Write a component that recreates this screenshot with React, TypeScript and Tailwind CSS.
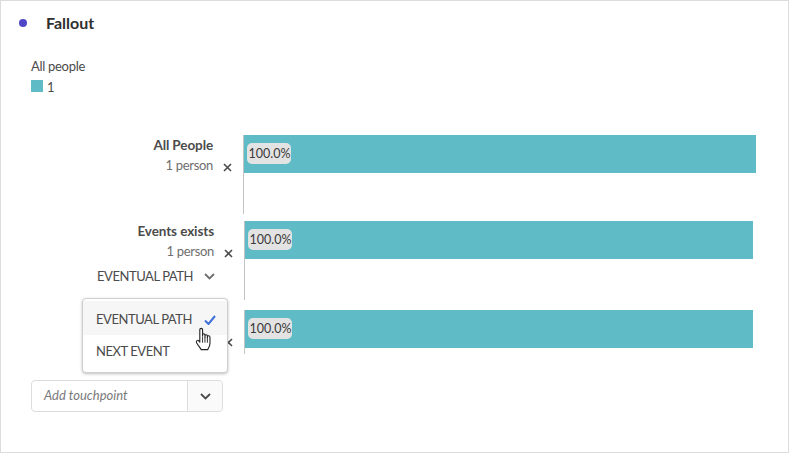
import { ReactNode } from "react";

const font = "font-['Lato','Noto_Sans',sans-serif]";

const CloseX = () => (
  <svg width="9" height="9" viewBox="0 0 9 9" className="block">
    <path d="M1 1 L8 8 M8 1 L1 8" stroke="#4b4b4b" strokeWidth="1.6" fill="none" />
  </svg>
);

const Chevron = ({ color = "#4b4b4b" }: { color?: string }) => (
  <svg width="11" height="7" viewBox="0 0 11 7" className="block">
    <path d="M1 1 L5.5 5.5 L10 1" stroke={color} strokeWidth="1.8" fill="none" />
  </svg>
);

const Pill = () => (
  <span className="ml-[3px] mt-[8px] flex h-[21px] w-[44px] items-center justify-center rounded-[5px] bg-[#e3e3e3] pt-[2px] pl-[1px] text-[12.5px] text-[#3a3a3a]">
    100.0%
  </span>
);

// one funnel step: label column on the left, line and bar on the right
const Step = ({
  className,
  labelClass,
  lineClass,
  barClass,
  children,
}: {
  className: string;
  labelClass: string;
  lineClass: string;
  barClass: string;
  children?: ReactNode;
}) => (
  <div className={`flex ${className}`}>
    <div className={`flex flex-col items-end pr-[11px] ${labelClass}`}>{children}</div>
    <div className={`w-px bg-[#c4c4c4] ${lineClass}`} />
    <div className={`flex h-[38px] bg-[#5fbcc6] ${barClass}`}>
      <Pill />
    </div>
  </div>
);

const Stats = ({ title }: { title: string }) => (
  <>
    <div className="pt-[1px] pr-[19px] text-[13.5px] leading-[18px] font-bold tracking-[-0.1px] text-[#4b4b4b]">{title}</div>
    <div className="mt-[2px] flex items-center text-[13px] leading-[18px] tracking-[-0.3px] text-[#6e6e6e]">
      <span className="mr-[10px]">1 person</span>
      <span className="pt-[4px]">
        <CloseX />
      </span>
    </div>
  </>
);

const Hand = () => (
  <svg width="17" height="24" viewBox="0 0 18 26" className="absolute left-[112px] top-[28px]">
    <path
      d="M5 14 V3 C5 1 8 1 8 3 V10 V8.5 C8 7 10.6 7 10.6 8.5 V11 V9.5 C10.6 8 13.2 8 13.2 9.5 V11.5 V10.5 C13.2 9 16 9.2 16 11 V18 C16 21 14.5 23 13.5 24.5 H6.5 C5 22 3.5 20.5 1.5 17 C0.5 15 2.8 13.6 4 15 L5 16.5 Z"
      fill="#fff"
      stroke="#222"
      strokeWidth="1.2"
      strokeLinejoin="round"
    />
    <path d="M8 11 V17 M10.6 11 V17 M13.2 11.5 V17" stroke="#222" strokeWidth="1" fill="none" />
  </svg>
);

const Menu = () => (
  <div className="absolute left-[81px] top-[297px] h-[75px] w-[146px] rounded-[4px] border border-[#cfcfcf] bg-white pt-[2px] text-[13px] tracking-[-0.45px] text-[#4b4b4b] shadow-[0_1px_3px_rgba(0,0,0,0.25)]">
    <div className="flex h-[34px] items-center justify-between bg-[#f6f6f6] pl-[13px] pr-[11px] pt-[4px]">
      <span className="whitespace-nowrap">EVENTUAL PATH</span>
      <svg width="12" height="10" viewBox="0 0 12 10" className="block">
        <path d="M1 5.5 L4.5 9 L11 1" stroke="#3f6fd8" strokeWidth="2" fill="none" />
      </svg>
    </div>
    <div className="flex h-[30px] items-center pl-[13px] pt-[4px]">NEXT EVENT</div>
    <Hand />
  </div>
);

export default function App() {
  return (
    <div className={`relative h-[453px] w-[789px] overflow-hidden border border-[#dcdcdc] bg-white ${font}`}>
      <div className="flex h-[44px] items-center pl-[18px]">
        <span className="h-[8px] w-[8px] rounded-full bg-[#4f46c8]" />
        <h1 className="ml-[19px] text-[16px] font-bold text-[#2f2f2f]">Fallout</h1>
      </div>

      <div className="ml-[30px] mt-[12px] text-[13px] leading-[18px] tracking-[-0.3px] text-[#4b4b4b]">
        <div>All people</div>
        <div className="mt-[2px] flex items-center">
          <span className="h-[12px] w-[12px] bg-[#5fbcc6]" />
          <span className="ml-[4px] translate-y-[1px]">1</span>
        </div>
      </div>

      <Step className="mt-[40px]" labelClass="w-[242px]" lineClass="h-[79px]" barClass="w-[512px]">
        <Stats title="All People" />
      </Step>

      <Step className="mt-[7px]" labelClass="w-[243px]" lineClass="h-[79px]" barClass="w-[508px]">
        <Stats title="Events exists" />
        <div className="mt-[7px] flex items-center text-[13px] leading-[18px] tracking-[-0.45px] text-[#4b4b4b]">
          <span>EVENTUAL PATH</span>
          <span className="ml-[11px] mr-[18px]">
            <Chevron color="#6e6e6e" />
          </span>
        </div>
      </Step>

      <Step className="mt-[10px]" labelClass="w-[243px]" lineClass="h-[44px]" barClass="w-[508px]">
        <div className="mt-[28px]">
          <CloseX />
        </div>
      </Step>

      <div className="ml-[30px] mt-[26px] flex h-[32px] w-[192px] rounded-[4px] border border-[#dcdcdc] bg-white">
        <div className="flex flex-1 items-center pl-[12px] text-[13px] text-[#7a7a7a] italic">Add touchpoint</div>
        <div className="flex w-[35px] items-center justify-center rounded-r-[4px] border-l border-[#dcdcdc] bg-[#fafafa]">
          <Chevron />
        </div>
      </div>

      <Menu />
    </div>
  );
}
